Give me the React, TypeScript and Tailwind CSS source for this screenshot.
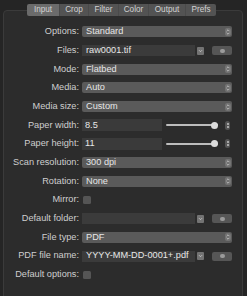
import React from 'react';

const tabs = ['Input', 'Crop', 'Filter', 'Color', 'Output', 'Prefs'];
const tabWidths = ['w-[32px]', 'w-[29px]', 'w-[30px]', 'w-[30px]', 'w-[37px]', 'w-[31px]'];

const Updown = () => (
  <svg width="6" height="8" viewBox="0 0 6 8" className="shrink-0">
    <rect x="0" y="0" width="6" height="8" rx="2" fill="#727272" />
    <path d="M1.6 3.2 L3 1.8 L4.4 3.2 M1.6 4.8 L3 6.2 L4.4 4.8" stroke="#c9c9c9" strokeWidth="0.8" fill="none" />
  </svg>
);

const Label = ({ children }: { children: React.ReactNode }) => (
  <div className="w-[75px] shrink-0 text-right text-[#cfcfcf]">{children}</div>
);

const Select = ({ value }: { value: string }) => (
  <div className="flex-1 h-[11px] bg-[#5a5a5a] rounded-[2px] flex items-center pl-[4px] pr-[1px] text-[#e6e6e6]">
    <span className="flex-1">{value}</span>
    <Updown />
  </div>
);

const DotsButton = () => (
  <div className="w-[20px] h-[9px] bg-[#565656] rounded-[2px] flex items-center justify-center shrink-0">
    <div className="w-[5px] h-[4px] rounded-full bg-[#9a9a9a]" />
  </div>
);

const DropBtn = () => (
  <div className="w-[7px] h-[8px] bg-[#737373] rounded-[1px] flex items-center justify-center shrink-0">
    <svg width="5" height="4" viewBox="0 0 5 4">
      <path d="M1 1.2 L2.5 2.7 L4 1.2" stroke="#d0d0d0" strokeWidth="0.8" fill="none" />
    </svg>
  </div>
);

const FileField = ({ value }: { value: string }) => (
  <div className="flex-1 flex items-center">
    <div className="flex-1 h-[11px] bg-[#3b3b3b] flex items-center pl-[4px] text-[#e8e8e8]">{value}</div>
    <div className="ml-[2px]"><DropBtn /></div>
    <div className="ml-[8px]"><DotsButton /></div>
  </div>
);

const SliderField = ({ value }: { value: string }) => (
  <div className="flex-1 flex items-center">
    <div className="w-[80px] h-[12px] bg-[#3a3a3a] flex items-center pl-[3px] text-[#e8e8e8]">{value}</div>
    <div className="ml-[4px] w-[52px] relative h-[8px] flex items-center">
      <div className="w-full h-[2px] bg-[#bdbdbd] rounded-full" />
      <div className="absolute right-0 w-[7px] h-[7px] rounded-full bg-[#dcdcdc]" />
    </div>
    <div className="ml-[7px] w-[5px] h-[9px] rounded-full bg-[#555] flex flex-col items-center justify-center gap-[1px]">
      <div className="w-[2px] h-[2px] bg-[#a8a8a8]" />
      <div className="w-[2px] h-[2px] bg-[#a8a8a8]" />
    </div>
  </div>
);

const Check = () => (
  <div className="w-[8px] h-[8px] bg-[#555] rounded-[1.5px] ml-[1px]" />
);

const Row = ({ label, children }: { label: string; children: React.ReactNode }) => (
  <div className="h-[18.7px] flex items-center">
    <Label>{label}</Label>
    <div className="ml-[3px] flex-1 flex items-center">{children}</div>
  </div>
);

export default function App() {
  return (
    <div className="w-[247px] h-[296px] bg-[#252525] overflow-hidden font-['Liberation_Sans',Arial,sans-serif] text-[9.2px] leading-none">
      <div className="relative z-10 pt-[4px] pl-[27px] flex">
        <div className="flex h-[12px] rounded-[2px] overflow-hidden text-[8.2px]">
          {tabs.map((t, i) => (
            <div
              key={t}
              className={`flex items-center justify-center text-[#d2d2d2] ${tabWidths[i]} ${i === 0 ? 'bg-[#6b6b6b]' : 'bg-[#535353] border-l border-[#4a4a4a]'}`}
            >
              {t}
            </div>
          ))}
        </div>
      </div>
      <div className="mt-[-6px] mx-[3px] mr-[4px] h-[300px] border border-[#3b3b3b] rounded-[4px] bg-[#2c2c2c] pt-[11.5px] pr-[10px]">
        <Row label="Options:"><Select value="Standard" /></Row>
        <Row label="Files:"><FileField value="raw0001.tif" /></Row>
        <Row label="Mode:"><Select value="Flatbed" /></Row>
        <Row label="Media:"><Select value="Auto" /></Row>
        <Row label="Media size:"><Select value="Custom" /></Row>
        <Row label="Paper width:"><SliderField value="8.5" /></Row>
        <Row label="Paper height:"><SliderField value="11" /></Row>
        <Row label="Scan resolution:"><Select value="300 dpi" /></Row>
        <Row label="Rotation:"><Select value="None" /></Row>
        <Row label="Mirror:"><Check /></Row>
        <Row label="Default folder:"><FileField value="" /></Row>
        <Row label="File type:"><Select value="PDF" /></Row>
        <Row label="PDF file name:"><FileField value="YYYY-MM-DD-0001+.pdf" /></Row>
        <Row label="Default options:"><Check /></Row>
      </div>
    </div>
  );
}
